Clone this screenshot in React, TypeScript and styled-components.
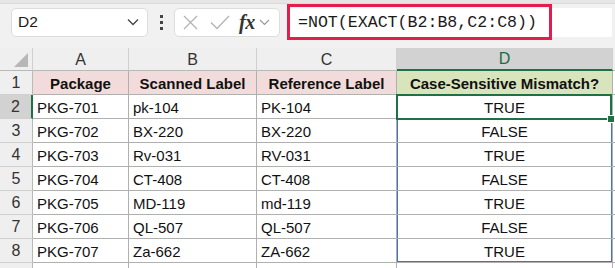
import * as React from "react"
import styled, { createGlobalStyle, css } from "styled-components"

const GlobalStyle = createGlobalStyle`
    html, body {
        margin: 0;
        padding: 0;
        background: #ffffff;
    }
    body {
        font-family: "Liberation Sans", Arial, sans-serif;
        color: #111;
    }
`

interface Row {
    pkg: string
    scanned: string
    reference: string
    mismatch: string
}

const rows: Row[] = [
    { pkg: "PKG-701", scanned: "pk-104", reference: "PK-104", mismatch: "TRUE" },
    { pkg: "PKG-702", scanned: "BX-220", reference: "BX-220", mismatch: "FALSE" },
    { pkg: "PKG-703", scanned: "Rv-031", reference: "RV-031", mismatch: "TRUE" },
    { pkg: "PKG-704", scanned: "CT-408", reference: "CT-408", mismatch: "FALSE" },
    { pkg: "PKG-705", scanned: "MD-119", reference: "md-119", mismatch: "TRUE" },
    { pkg: "PKG-706", scanned: "QL-507", reference: "QL-507", mismatch: "FALSE" },
    { pkg: "PKG-707", scanned: "Za-662", reference: "ZA-662", mismatch: "TRUE" },
]

const Page = styled.div`
    width: 615px;
    height: 268px;
    overflow: hidden;
    background: #ffffff;
`

const RibbonEdge = styled.div`
    height: 3px;
    background: #e6e6e6;
    border-bottom: 1px solid #dadada;
`

const Toolbar = styled.div`
    display: flex;
    align-items: center;
    height: 44px;
    padding: 0 3px 0 11px;
    background: #f1f1f1;
    box-sizing: border-box;
`

const Box = styled.div<{ $width: number }>`
    display: flex;
    align-items: center;
    width: ${(p) => p.$width}px;
    height: 29px;
    margin-top: -8px;
    background: #ffffff;
    border: 1px solid #dddddd;
    border-radius: 5px;
    box-sizing: border-box;
`

const NameText = styled.span`
    flex: 1;
    padding-left: 6px;
    font-size: 15.5px;
    color: #1a1a1a;
`

const Chevron = styled.svg`
    margin-right: 8px;
`

const Dots = styled.div`
    display: flex;
    flex-direction: column;
    gap: 3px;
    margin: -8px 11px 0 12px;
`

const Dot = styled.span`
    width: 3px;
    height: 3px;
    background: #444444;
`

const IconButton = styled.svg`
    margin-left: 8px;
`

const Fx = styled.span`
    margin-left: 9px;
    font-family: "Liberation Serif", "Times New Roman", serif;
    font-style: italic;
    font-weight: bold;
    font-size: 20px;
    line-height: 1;
    color: #333333;
    letter-spacing: -0.5px;
`

const FormulaBar = styled.div`
    flex: 1;
    display: flex;
    align-items: center;
    height: 29px;
    margin: -8px 0 0 7px;
    background: #ffffff;
`

const FormulaHighlight = styled.div`
    display: flex;
    align-items: center;
    width: 265px;
    height: 36px;
    padding-left: 8px;
    border: 3px solid #e31e4c;
    box-sizing: border-box;
    font-family: "Liberation Mono", "Courier New", monospace;
    font-size: 16.6px;
    color: #1a1a1a;
`

const Sheet = styled.div`
    position: relative;
    display: grid;
    grid-template-columns: 33px 96px 128px 140px 216px 1fr;
    grid-template-rows: 23px;
    grid-auto-rows: 24px;
    background: #ffffff;
`

type Kind = "corner" | "col" | "row" | "head" | "data"

const Cell = styled.div<{
    $kind: Kind
    $fill?: string
    $center?: boolean
    $active?: boolean
    $blue?: boolean
    $blueEnd?: boolean
}>`
    display: flex;
    align-items: center;
    justify-content: ${(p) => (p.$center ? "center" : "flex-start")};
    padding: 1px 4px 0;
    font-size: 15px;
    box-sizing: border-box;
    border-right: 1px solid #c8c8c8;
    border-bottom: 1px solid #c8c8c8;
    white-space: nowrap;
    overflow: hidden;
    background: ${(p) => p.$fill || "#ffffff"};

    ${(p) =>
        (p.$kind === "col" || p.$kind === "corner") &&
        css`
            background: ${p.$active ? "#d2d2d2" : "#efefef"};
            border-right-color: #d0d0d0;
            border-bottom: ${p.$active ? "2px solid #1e7145" : "1px solid #b9b9b9"};
            color: ${p.$active ? "#1e6b41" : "#333333"};
            font-size: 16px;
        `}

    ${(p) =>
        p.$kind === "row" &&
        css`
            background: ${p.$active ? "#d2d2d2" : "#efefef"};
            border-right: ${p.$active ? "2px solid #1e7145" : "1px solid #b9b9b9"};
            border-bottom-color: #d0d0d0;
            color: #333333;
            font-size: 16px;
        `}

    ${(p) =>
        p.$kind === "head" &&
        css`
            font-weight: bold;
            border-color: #b0b0b0;
        `}

    ${(p) =>
        p.$kind === "data" &&
        css`
            border-color: #b0b0b0;
        `}

    ${(p) =>
        p.$blue &&
        css`
            box-shadow: inset 1px 0 #4472c4, inset -1px 0 #4472c4
                ${p.$blueEnd ? ", inset 0 -1px #4472c4" : ""};
        `}
`

const Corner = styled.svg`
    margin-left: auto;
    margin-top: auto;
    margin-bottom: 3px;
`

const Selection = styled.div`
    position: absolute;
    left: 396px;
    top: 46px;
    width: 216px;
    height: 26px;
    border: 2px solid #1e7145;
    box-sizing: border-box;
    pointer-events: none;
`

const FillHandle = styled.div`
    position: absolute;
    right: -5px;
    bottom: -5px;
    width: 6px;
    height: 6px;
    background: #1e7145;
    border: 1px solid #ffffff;
`

const cols = ["A", "B", "C", "D"]

export default function App() {
    return (
        <Page>
            <GlobalStyle />
            <RibbonEdge />
            <Toolbar>
                <Box $width={137}>
                    <NameText>D2</NameText>
                    <Chevron width="12" height="8" viewBox="0 0 12 8">
                        <polyline
                            points="1,1.5 6,6.5 11,1.5"
                            fill="none"
                            stroke="#444"
                            strokeWidth="1.3"
                        />
                    </Chevron>
                </Box>
                <Dots>
                    <Dot />
                    <Dot />
                    <Dot />
                </Dots>
                <Box $width={106}>
                    <IconButton width="15" height="15" viewBox="0 0 15 15">
                        <path
                            d="M1 1 L14 14 M14 1 L1 14"
                            stroke="#b4b4b4"
                            strokeWidth="1.3"
                            fill="none"
                        />
                    </IconButton>
                    <IconButton width="20" height="15" viewBox="0 0 20 15" style={{ marginLeft: 12 }}>
                        <polyline
                            points="1,7.5 7,13.5 19,1"
                            stroke="#b4b4b4"
                            strokeWidth="1.3"
                            fill="none"
                        />
                    </IconButton>
                    <Fx>fx</Fx>
                    <Chevron width="11" height="7" viewBox="0 0 11 7" style={{ marginLeft: 4 }}>
                        <polyline
                            points="1,1 5.5,5.5 10,1"
                            fill="none"
                            stroke="#999"
                            strokeWidth="1.2"
                        />
                    </Chevron>
                </Box>
                <FormulaBar>
                    <FormulaHighlight>=NOT(EXACT(B2:B8,C2:C8))</FormulaHighlight>
                </FormulaBar>
            </Toolbar>
            <Sheet>
                <Cell $kind="corner">
                    <Corner width="14" height="14" viewBox="0 0 14 14">
                        <polygon points="14,0 14,14 0,14" fill="#b7b7b7" />
                    </Corner>
                </Cell>
                {cols.map((c) => (
                    <Cell key={c} $kind="col" $center $active={c === "D"}>
                        {c}
                    </Cell>
                ))}
                <Cell $kind="col" />

                <Cell $kind="row" $center>
                    1
                </Cell>
                <Cell $kind="head" $center $fill="#f2dcdb">
                    Package
                </Cell>
                <Cell $kind="head" $center $fill="#f2dcdb">
                    Scanned Label
                </Cell>
                <Cell $kind="head" $center $fill="#f2dcdb">
                    Reference Label
                </Cell>
                <Cell $kind="head" $center $fill="#d8e4bc">
                    Case-Sensitive Mismatch?
                </Cell>
                <Cell $kind="data" />

                {rows.map((r, i) => (
                    <React.Fragment key={r.pkg}>
                        <Cell $kind="row" $center $active={i === 0}>
                            {i + 2}
                        </Cell>
                        <Cell $kind="data">{r.pkg}</Cell>
                        <Cell $kind="data">{r.scanned}</Cell>
                        <Cell $kind="data">{r.reference}</Cell>
                        <Cell
                            $kind="data"
                            $center
                            $blue
                            $blueEnd={i === rows.length - 1}
                        >
                            {r.mismatch}
                        </Cell>
                        <Cell $kind="data" />
                    </React.Fragment>
                ))}

                <Cell $kind="row" />
                <Cell $kind="data" />
                <Cell $kind="data" />
                <Cell $kind="data" />
                <Cell $kind="data" />
                <Cell $kind="data" />

                <Selection>
                    <FillHandle />
                </Selection>
            </Sheet>
        </Page>
    )
}
